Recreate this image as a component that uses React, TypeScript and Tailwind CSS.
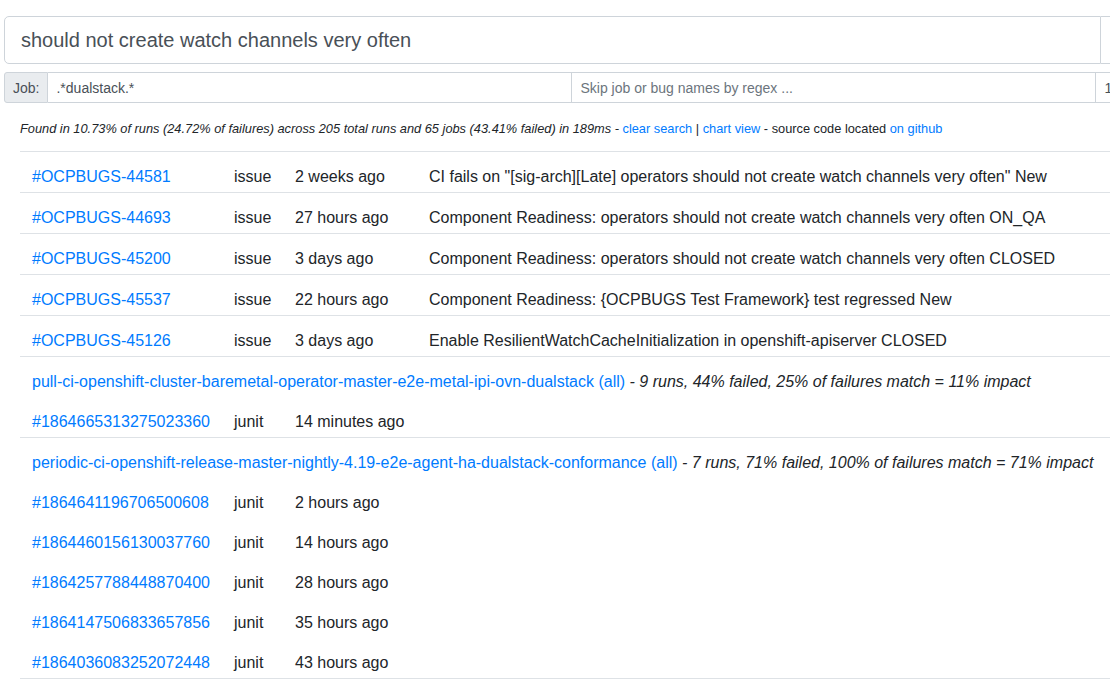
import React from 'react';

type Issue = { id: string; age: string; title: string };
type Job = { name: string; stats: string; runs: { id: string; age: string }[] };

const issues: Issue[] = [
  { id: '#OCPBUGS-44581', age: '2 weeks ago', title: 'CI fails on "[sig-arch][Late] operators should not create watch channels very often" New' },
  { id: '#OCPBUGS-44693', age: '27 hours ago', title: 'Component Readiness: operators should not create watch channels very often ON_QA' },
  { id: '#OCPBUGS-45200', age: '3 days ago', title: 'Component Readiness: operators should not create watch channels very often CLOSED' },
  { id: '#OCPBUGS-45537', age: '22 hours ago', title: 'Component Readiness: {OCPBUGS Test Framework} test regressed New' },
  { id: '#OCPBUGS-45126', age: '3 days ago', title: 'Enable ResilientWatchCacheInitialization in openshift-apiserver CLOSED' },
];

const jobs: Job[] = [
  {
    name: 'pull-ci-openshift-cluster-baremetal-operator-master-e2e-metal-ipi-ovn-dualstack',
    stats: '9 runs, 44% failed, 25% of failures match = 11% impact',
    runs: [{ id: '#1864665313275023360', age: '14 minutes ago' }],
  },
  {
    name: 'periodic-ci-openshift-release-master-nightly-4.19-e2e-agent-ha-dualstack-conformance',
    stats: '7 runs, 71% failed, 100% of failures match = 71% impact',
    runs: [
      { id: '#1864641196706500608', age: '2 hours ago' },
      { id: '#1864460156130037760', age: '14 hours ago' },
      { id: '#1864257788448870400', age: '28 hours ago' },
      { id: '#1864147506833657856', age: '35 hours ago' },
      { id: '#1864036083252072448', age: '43 hours ago' },
    ],
  },
];

const cell = 'px-3 pt-[13px] pb-[3px] leading-6 align-top whitespace-nowrap';

const App: React.FC = () => {
  return (
    <div className="w-[1110px] h-[682px] overflow-hidden bg-white font-['Liberation_Sans',Arial,sans-serif] text-[#212529] text-base">
      <div className="w-[1240px] pl-1 pt-4">
        {/* search box */}
        <div className="flex">
          <div className="w-[1097px] h-12 border border-[#ced4da] rounded-l-[5px] px-4 py-2 text-xl leading-[30px] text-[#495057]">
            should not create watch channels very often
          </div>
          <div className="w-[80px] h-12 border border-l-0 border-[#ced4da]" />
        </div>

        {/* filters */}
        <div className="flex mt-2 text-sm leading-[21px] text-[#495057]">
          <div className="h-[31px] px-2 pt-[5px] pb-[3px] bg-[#e9ecef] border border-[#ced4da] rounded-l-[3px]">Job:</div>
          <div className="w-[524px] h-[31px] px-2 pt-[5px] pb-[3px] border border-l-0 border-[#ced4da]">.*dualstack.*</div>
          <div className="w-[524px] h-[31px] px-2 pt-[5px] pb-[3px] border border-l-0 border-[#ced4da] text-[#6c757d]">
            Skip job or bug names by regex ...
          </div>
          <div className="w-[80px] h-[31px] px-2 pt-[5px] pb-[3px] border border-l-0 border-[#ced4da]">1d</div>
        </div>

        <div className="ml-4">
          <p className="mt-4 mb-[13px] text-[12.8px] leading-[19.2px]">
            <em>
              Found in 10.73% of runs (24.72% of failures) across 205 total runs and 65 jobs (43.41% failed) in 189ms -{' '}
            </em>
            <a className="text-[#007bff]">clear search</a> | <a className="text-[#007bff]">chart view</a> - source code
            located <a className="text-[#007bff]">on github</a>
          </p>

          <table className="table-fixed w-[1200px] border-collapse border-b border-[#dee2e6]">
            <colgroup>
              <col className="w-[202px]" />
              <col className="w-[61px]" />
              <col className="w-[134px]" />
              <col />
            </colgroup>
            <tbody>
              {issues.map((it) => (
                <tr key={it.id} className="border-t border-[#dee2e6]">
                  <td className={cell}>
                    <a className="text-[#007bff]">{it.id}</a>
                  </td>
                  <td className={cell}>issue</td>
                  <td className={cell}>{it.age}</td>
                  <td className={cell}>{it.title}</td>
                </tr>
              ))}
              {jobs.map((job) => (
                <React.Fragment key={job.name}>
                  <tr className="border-t border-[#dee2e6]">
                    <td colSpan={4} className={cell}>
                      <a className="text-[#007bff]">{job.name} (all)</a> <em>- {job.stats}</em>
                    </td>
                  </tr>
                  {job.runs.map((r) => (
                    <tr key={r.id}>
                      <td className={cell}>
                        <a className="text-[#007bff]">{r.id}</a>
                      </td>
                      <td className={cell}>junit</td>
                      <td className={cell}>{r.age}</td>
                      <td className={cell}></td>
                    </tr>
                  ))}
                </React.Fragment>
              ))}
            </tbody>
          </table>
        </div>
      </div>
    </div>
  );
};

export default App;
